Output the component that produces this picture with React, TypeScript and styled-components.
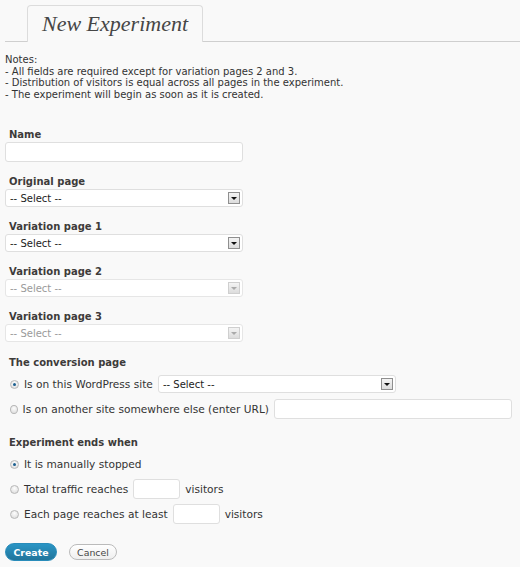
import React from "react";
import styled, { createGlobalStyle } from "styled-components";

const GlobalStyle = createGlobalStyle`
  html, body {
    margin: 0;
    padding: 0;
    background: #f9f9f9;
  }
  body {
    font-family: "DejaVu Sans", Verdana, sans-serif;
    font-size: 10px;
    color: #333;
  }
`;

const Page = styled.div`
  padding: 5px 8px 0 5px;
  width: 520px;
  box-sizing: border-box;
  min-height: 567px;
`;

const TabBar = styled.div`
  display: flex;
  padding-left: 22px;
  border-bottom: 1px solid #cfcfcf;
  margin-right: -8px;
`;

const Tab = styled.div`
  width: 176px;
  height: 37px;
  box-sizing: border-box;
  border: 1px solid #dcdcdc;
  border-bottom: none;
  border-radius: 4px 4px 0 0;
  background: #f9f9f9;
  margin-bottom: -1px;
  display: flex;
  align-items: center;
  justify-content: center;
`;

const TabTitle = styled.h2`
  margin: 0;
  font-family: "Liberation Serif", Georgia, serif;
  font-style: italic;
  font-weight: normal;
  font-size: 22px;
  color: #464646;
`;

const Notes = styled.div`
  margin-top: 12px;
  line-height: 11.6px;
`;

const Fields = styled.div`
  margin-top: 29px;
  display: flex;
  flex-direction: column;
`;

const Field = styled.div`
  margin-bottom: 14px;
`;

const Label = styled.div`
  font-weight: bold;
  color: #3d3b3a;
  line-height: 12px;
  margin-bottom: 1px;
  padding-left: 4px;
`;

const TextInput = styled.input<{ $w: number }>`
  display: block;
  flex: none;
  width: ${(p) => p.$w}px;
  height: 20px;
  box-sizing: border-box;
  border: 1px solid #dfdfdf;
  border-radius: 3px;
  background: #fff;
  margin: 0;
  padding: 0 4px;
  font: inherit;
`;

const SelectBox = styled.div<{ $w: number; $disabled?: boolean }>`
  display: flex;
  flex: none;
  align-items: center;
  justify-content: space-between;
  width: ${(p) => p.$w}px;
  height: 18px;
  box-sizing: border-box;
  border: 1px solid ${(p) => (p.$disabled ? "#e6e6e6" : "#dfdfdf")};
  border-radius: 3px;
  background: #fff;
  padding: 0 2px 0 4px;
  color: ${(p) => (p.$disabled ? "#9a9a9a" : "#222")};
  font-size: 10px;
`;

const Arrow = styled.span<{ $disabled?: boolean }>`
  display: flex;
  align-items: center;
  justify-content: center;
  width: 12px;
  height: 12px;
  box-sizing: border-box;
  border: 1px solid ${(p) => (p.$disabled ? "#cfcfcf" : "#8f8f8f")};
  background: linear-gradient(#f4f4f4, #dcdcdc);
  &::after {
    content: "";
    border-left: 3px solid transparent;
    border-right: 3px solid transparent;
    border-top: 3px solid ${(p) => (p.$disabled ? "#aaa" : "#111")};
  }
`;

const Section = styled.div`
  margin-top: 1px;
  margin-bottom: 17px;
  display: flex;
  flex-direction: column;
  gap: 5px;
`;

const SectionLabel = styled(Label)`
  margin-bottom: 0;
`;

const RadioRow = styled.label`
  display: flex;
  align-items: center;
  gap: 5px;
  min-height: 20px;
  padding-left: 5px;
  white-space: nowrap;
  font-size: 10.6px;
`;

const Radio = styled.span<{ $checked?: boolean }>`
  width: 9px;
  height: 9px;
  box-sizing: border-box;
  border-radius: 50%;
  border: 1px solid #b8b8b8;
  background: radial-gradient(circle at 50% 35%, #fdfdfd, #d9d9d9);
  display: flex;
  align-items: center;
  justify-content: center;
  &::after {
    content: "";
    display: ${(p) => (p.$checked ? "block" : "none")};
    width: 3px;
    height: 3px;
    border-radius: 50%;
    background: #1c5f8f;
  }
`;

const Buttons = styled.div`
  display: flex;
  align-items: center;
  gap: 12px;
  margin-top: 2px;
`;

const PrimaryButton = styled.button`
  height: 18px;
  width: 52px;
  padding: 0;
  border-radius: 11px;
  border: 1px solid #298cba;
  background: linear-gradient(#2a95c5, #21759b);
  color: #fff;
  font-family: inherit;
  font-size: 9.4px;
  font-weight: bold;
`;

const SecondaryButton = styled.button`
  height: 16px;
  width: 48px;
  padding: 0;
  border-radius: 11px;
  border: 1px solid #bbb;
  background: linear-gradient(#fff, #efefef);
  color: #464646;
  font-family: inherit;
  font-size: 9.4px;
`;

const Select = ({ w, disabled }: { w: number; disabled?: boolean }) => (
  <SelectBox $w={w} $disabled={disabled}>
    <span>-- Select --</span>
    <Arrow $disabled={disabled} />
  </SelectBox>
);

export default function App() {
  return (
    <Page>
      <GlobalStyle />
      <TabBar>
        <Tab>
          <TabTitle>New Experiment</TabTitle>
        </Tab>
      </TabBar>

      <Notes>
        Notes:
        <br />- All fields are required except for variation pages 2 and 3.
        <br />- Distribution of visitors is equal across all pages in the experiment.
        <br />- The experiment will begin as soon as it is created.
      </Notes>

      <Fields>
        <Field>
          <Label>Name</Label>
          <TextInput $w={238} />
        </Field>
        <Field>
          <Label>Original page</Label>
          <Select w={238} />
        </Field>
        <Field>
          <Label>Variation page 1</Label>
          <Select w={238} />
        </Field>
        <Field>
          <Label>Variation page 2</Label>
          <Select w={238} disabled />
        </Field>
        <Field>
          <Label>Variation page 3</Label>
          <Select w={238} disabled />
        </Field>

        <Section>
          <SectionLabel>The conversion page</SectionLabel>
          <RadioRow>
            <Radio $checked />
            Is on this WordPress site
            <Select w={238} />
          </RadioRow>
          <RadioRow>
            <Radio />
            Is on another site somewhere else (enter URL)
            <TextInput $w={238} />
          </RadioRow>
        </Section>

        <Section>
          <SectionLabel>Experiment ends when</SectionLabel>
          <RadioRow>
            <Radio $checked />
            It is manually stopped
          </RadioRow>
          <RadioRow>
            <Radio />
            Total traffic reaches
            <TextInput $w={47} />
            visitors
          </RadioRow>
          <RadioRow>
            <Radio />
            Each page reaches at least
            <TextInput $w={47} />
            visitors
          </RadioRow>
        </Section>

        <Buttons>
          <PrimaryButton>Create</PrimaryButton>
          <SecondaryButton>Cancel</SecondaryButton>
        </Buttons>
      </Fields>
    </Page>
  );
}
